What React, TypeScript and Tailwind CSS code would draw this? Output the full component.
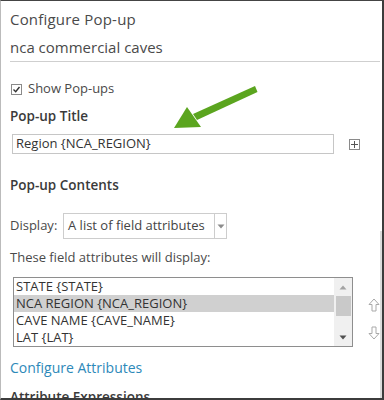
const font = { fontFamily: '"Open Sans", "Liberation Sans", sans-serif' };

const fields = [
  { label: "STATE {STATE}", selected: false },
  { label: "NCA REGION {NCA_REGION}", selected: true },
  { label: "CAVE NAME {CAVE_NAME}", selected: false },
  { label: "LAT {LAT}", selected: false },
];

const OutlineArrow = ({ down }: { down?: boolean }) => (
  <svg width="12" height="14" viewBox="0 0 12 14" className={down ? "rotate-180" : ""}>
    <path d="M6 1 L11 6.5 L8 6.5 L8 13 L4 13 L4 6.5 L1 6.5 Z" fill="none" stroke="#a9a9a9" strokeWidth="1" />
  </svg>
);

const App = () => {
  return (
    <div
      className="relative w-[384px] h-[400px] overflow-hidden bg-white border-t border-l border-t-[#444] border-l-[#bbb] border-r-2 border-b-2 border-r-[#3c3c3c] border-b-[#3c3c3c] text-[#4a4a4a]"
      style={font}
    >
      <div className="absolute right-0 top-[230px] bottom-0 w-[2px] bg-[#dcdcdc]" />
      <div className="pl-[9px] pr-[2px]">
        <div className="h-[36px] flex items-center text-[15px] tracking-[0.2px]">Configure Pop-up</div>
        <div className="h-[20px] flex items-center text-[15px]">nca commercial caves</div>
        <div className="mt-[4px] h-px bg-[#cfcfcf]" />

        <div className="mt-[17px] h-[20px] flex items-center gap-[6px] text-[13px]">
          <span className="w-[11px] h-[11px] border border-[#8a8a8a] flex items-center justify-center ml-[1px]">
            <svg width="9" height="9" viewBox="0 0 9 9">
              <path d="M1.5 4.5 L3.7 6.7 L7.5 2" fill="none" stroke="#333" strokeWidth="1.4" />
            </svg>
          </span>
          Show Pop-ups
        </div>

        <div className="mt-[7px] h-[20px] flex items-center text-[13.5px] font-semibold text-[#3a3a3a]">Pop-up Title</div>

        <div className="mt-[8px] flex items-center">
          <div className="ml-[2px] w-[322px] h-[20px] border border-[#c6c6c6] flex items-center px-[3px] text-[13px] text-[#333]">
            Region {"{NCA_REGION}"}
          </div>
          <span className="ml-[15px] w-[11px] h-[11px] border border-[#8a8a8a] flex items-center justify-center">
            <svg width="9" height="9" viewBox="0 0 9 9">
              <path d="M4.5 1 V8 M1 4.5 H8" stroke="#555" strokeWidth="1" />
            </svg>
          </span>
        </div>

        <div className="mt-[21px] h-[20px] flex items-center text-[13.5px] font-semibold text-[#3a3a3a]">Pop-up Contents</div>

        <div className="mt-[18px] flex items-center text-[13px]">
          <span className="w-[53px]">Display:</span>
          <div className="w-[164px] h-[26px] border border-[#cdcdcd] flex items-center">
            <span className="flex-1 px-[4px] text-[#444] whitespace-nowrap overflow-hidden">A list of field attributes</span>
            <span className="w-[12px] h-full border-l border-[#cdcdcd] flex items-center justify-center">
              <svg width="8" height="5" viewBox="0 0 8 5">
                <path d="M0.5 0.5 H7.5 L4 4.5 Z" fill="#8c8c8c" />
              </svg>
            </span>
          </div>
        </div>

        <div className="mt-[9px] h-[20px] flex items-center text-[13px]">These field attributes will display:</div>

        <div className="mt-[9px] flex">
          <div className="ml-[3px] w-[341px] h-[70px] border border-[#8e8e8e] flex">
            <div className="flex-1 flex flex-col text-[13px] text-[#333]">
              {fields.map((f) => (
                <div
                  key={f.label}
                  className={`h-[17px] flex items-center pl-[2px] whitespace-nowrap ${f.selected ? "bg-[#d0d0d0]" : ""}`}
                >
                  {f.label}
                </div>
              ))}
            </div>
            <div className="w-[18px] bg-[#f0f0f0] flex flex-col items-center">
              <div className="h-[18px] flex items-center justify-center">
                <svg width="8" height="5" viewBox="0 0 8 5">
                  <path d="M0.5 4.5 H7.5 L4 0.5 Z" fill="#a3a3a3" />
                </svg>
              </div>
              <div className="w-[15px] h-[20px] bg-[#c9c9c9]" />
              <div className="flex-1 flex items-end pb-[6px]">
                <svg width="8" height="5" viewBox="0 0 8 5">
                  <path d="M0.5 0.5 H7.5 L4 4.5 Z" fill="#505050" />
                </svg>
              </div>
            </div>
          </div>
          <div className="ml-[15px] flex flex-col gap-[14px] pt-[21px]">
            <OutlineArrow />
            <OutlineArrow down />
          </div>
        </div>

        <div className="mt-[10px] h-[20px] flex items-center text-[14px] text-[#2d89b9]">Configure Attributes</div>
        <div className="mt-[10px] h-[20px] flex items-center text-[13.5px] font-semibold text-[#3a3a3a]">Attribute Expressions</div>
      </div>

      <svg className="absolute left-0 top-0 pointer-events-none" width="384" height="400">
        <path d="M192 113 L254 85 L256.5 91 L196 119 Z" fill="#5ba51f" />
        <path d="M173 127 L186 106 L200 126 Z" fill="#5ba51f" />
      </svg>
    </div>
  );
};

export default App;
